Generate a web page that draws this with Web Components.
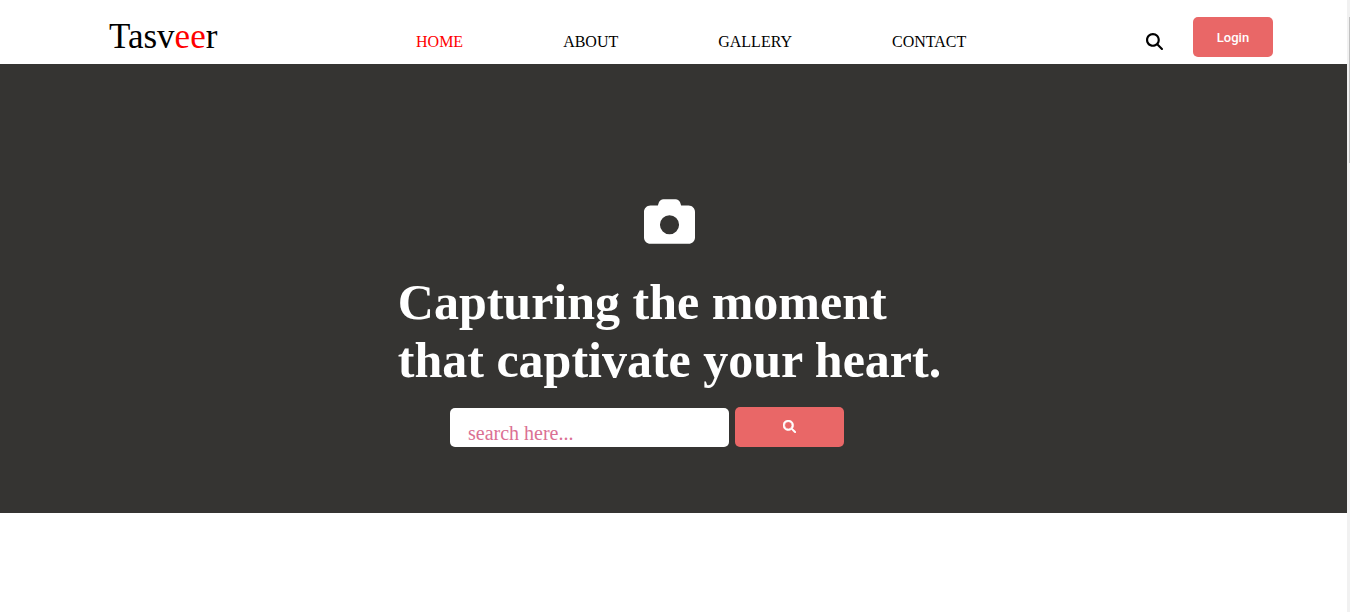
<!DOCTYPE html>
<html lang="en">
<head>
<meta charset="utf-8">
<meta name="viewport" content="width=device-width, initial-scale=1">
<title>Tasveer</title>
<style>
  html, body { margin: 0; height: 100%; overflow: hidden; background: #fff; }
  body { font-family: "Liberation Serif", "Times New Roman", serif; font-size: 16px; color: #000; }
</style>
</head>
<body>
<tasveer-page>
  <site-header slot="header">
    <site-nav>
      <nav-link href="#home" active>HOME</nav-link>
      <nav-link href="#about">ABOUT</nav-link>
      <nav-link href="#gallery">GALLERY</nav-link>
      <nav-link href="#contact">CONTACT</nav-link>
    </site-nav>
  </site-header>
  <hero-banner>
    Capturing the moment<br>that captivate your heart.
    <search-form slot="search"></search-form>
  </hero-banner>
</tasveer-page>

<script>
const define = (name, html, setup) => {
  const template = document.createElement('template');
  template.innerHTML = html;
  customElements.define(name, class extends HTMLElement {
    constructor() {
      super();
      this.attachShadow({ mode: 'open' }).append(template.content.cloneNode(true));
    }
    connectedCallback() { if (setup) setup(this); }
  });
};

define('search-icon', `
  <style>
    :host { display: block; width: 16px; height: 16px; }
    svg { display: block; width: 100%; height: 100%; fill: currentColor; }
    :host([bold]) svg { stroke: currentColor; stroke-width: 24; }
  </style>
  <svg viewBox="0 0 512 512" aria-hidden="true"><path d="M416 208c0 45.900-14.900 88.300-40 122.700L502.600 457.400c12.500 12.500 12.500 32.800 0 45.300s-32.800 12.500-45.300 0L330.700 376c-34.400 25.200-76.800 40-122.700 40C93.100 416 0 322.900 0 208S93.100 0 208 0S416 93.100 416 208zM208 352a144 144 0 1 0 0-288 144 144 0 1 0 0 288z"/></svg>`);

define('camera-icon', `
  <style>
    :host { display: block; width: 51px; height: 51px; }
    svg { display: block; width: 100%; height: 100%; fill: currentColor; }
  </style>
  <svg viewBox="0 0 512 512" aria-hidden="true"><path fill-rule="evenodd" d="M149 65L139 96H64C29 96 0 125 0 160V416c0 35 29 64 64 64H448c35 0 64-29 64-64V160c0-35-29-64-64-64H373L363 65C356 45 338 32 317 32H195c-21 0-39 13-46 33zM256 192a96 96 0 1 1 0 192 96 96 0 1 1 0-192z"/></svg>`);

define('nav-link', `
  <style>
    :host { display: block; }
    a { color: #000; text-decoration: none; line-height: 18px; display: block; }
    :host([active]) a { color: #f00; }
  </style>
  <a><slot></slot></a>`, el => {
    el.shadowRoot.querySelector('a').href = el.getAttribute('href');
  });

define('site-nav', `
  <style>
    :host { display: block; }
    nav { display: flex; gap: 100px; }
  </style>
  <nav><slot></slot></nav>`);

define('site-header', `
  <style>
    :host { display: block; }
    header { display: flex; justify-content: space-between; box-sizing: border-box;
      height: 64px; padding: 17px 74px 0 109px; background: #fff; }
    .logo { font-size: 35px; line-height: 40px; color: #000; text-decoration: none; }
    .logo span { color: #f00; }
    ::slotted(site-nav) { margin: 16px 0 0 19px; }
    .tools { display: flex; gap: 30px; }
    .find { width: 17px; height: 17px; margin: 16px 0 0; padding: 0; border: 0; background: none; color: #000; }
    .find search-icon { width: 17px; height: 17px; }
    .login { width: 80px; height: 40px; padding: 2px 0 0; border: 0; border-radius: 5px;
      background: #e96767; color: #fff; font: 500 13px/16px Roboto, sans-serif; }
  </style>
  <header>
    <a class="logo" href="#home">Tasv<span>ee</span>r</a>
    <slot></slot>
    <div class="tools">
      <button class="find" type="button" aria-label="Search"><search-icon></search-icon></button>
      <button class="login" type="button">Login</button>
    </div>
  </header>`);

define('search-form', `
  <style>
    :host { display: block; }
    form { display: flex; align-items: flex-end; gap: 6px; }
    input { box-sizing: border-box; width: 279px; height: 39px; padding: 12px 18px 0; border: 0;
      border-radius: 5px; background: #fff; color: #000; font: inherit; font-size: 20px; outline: 0; }
    input::placeholder { color: #db7093; opacity: 1; }
    button { display: flex; justify-content: center; align-items: center; width: 109px; height: 40px;
      padding: 0 0 2px; border: 0; border-radius: 5px; background: #e96767; color: #fff; }
    search-icon { width: 13px; height: 13px; }
  </style>
  <form role="search">
    <input type="text" placeholder="search here..." aria-label="Search photos">
    <button type="button" aria-label="Search"><search-icon bold></search-icon></button>
  </form>`);

define('hero-banner', `
  <style>
    :host { display: block; background: #353432; color: #fff; }
    section { display: flex; flex-direction: column; align-items: center; padding: 132px 8px 66px 0; }
    h1 { margin: 26px 0 18px; font-size: 50px; line-height: 58px; font-weight: 700; }
    ::slotted(search-form) { margin-right: 45px; }
  </style>
  <section>
    <camera-icon></camera-icon>
    <h1><slot></slot></h1>
    <slot name="search"></slot>
  </section>`);

define('scroll-rail', `
  <style>
    :host { display: block; background: #f1f1f1; box-sizing: border-box; padding: 17px 0 0 2px; }
    div { height: 146px; background: #c1c1c1; }
  </style>
  <div></div>`);

define('tasveer-page', `
  <style>
    :host { display: grid; grid-template-columns: 1fr 3px; min-height: 100%; }
  </style>
  <div>
    <slot name="header"></slot>
    <main><slot></slot></main>
  </div>
  <scroll-rail></scroll-rail>`);
</script>
</body>
</html>
